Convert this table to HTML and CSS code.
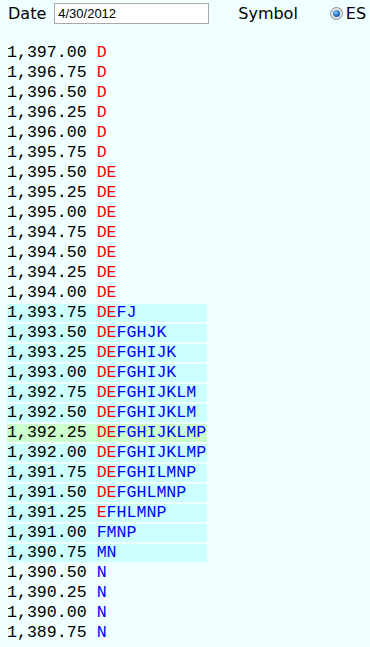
FILE: index.html
```html
<!DOCTYPE html>
<html>
<head>
<meta charset="utf-8">
<link rel="stylesheet" href="styles.css">
</head>
<body>
<div class="header">
  <span class="label">Date</span>
  <input class="date" type="text" value="4/30/2012">
  <span class="label symbol">Symbol</span>
  <span class="radio"><span class="dot"></span></span>
  <span class="label es">ES</span>
</div>
<div class="rows">
  <div class="row"><span class="price">1,397.00</span> <span class="r">D</span></div>
  <div class="row"><span class="price">1,396.75</span> <span class="r">D</span></div>
  <div class="row"><span class="price">1,396.50</span> <span class="r">D</span></div>
  <div class="row"><span class="price">1,396.25</span> <span class="r">D</span></div>
  <div class="row"><span class="price">1,396.00</span> <span class="r">D</span></div>
  <div class="row"><span class="price">1,395.75</span> <span class="r">D</span></div>
  <div class="row"><span class="price">1,395.50</span> <span class="r">DE</span></div>
  <div class="row"><span class="price">1,395.25</span> <span class="r">DE</span></div>
  <div class="row"><span class="price">1,395.00</span> <span class="r">DE</span></div>
  <div class="row"><span class="price">1,394.75</span> <span class="r">DE</span></div>
  <div class="row"><span class="price">1,394.50</span> <span class="r">DE</span></div>
  <div class="row"><span class="price">1,394.25</span> <span class="r">DE</span></div>
  <div class="row"><span class="price">1,394.00</span> <span class="r">DE</span></div>
  <div class="row hl"><span class="price">1,393.75</span> <span class="r">DE</span><span class="b">FJ</span></div>
  <div class="row hl"><span class="price">1,393.50</span> <span class="r">DE</span><span class="b">FGHJK</span></div>
  <div class="row hl"><span class="price">1,393.25</span> <span class="r">DE</span><span class="b">FGHIJK</span></div>
  <div class="row hl"><span class="price">1,393.00</span> <span class="r">DE</span><span class="b">FGHIJK</span></div>
  <div class="row hl"><span class="price">1,392.75</span> <span class="r">DE</span><span class="b">FGHIJKLM</span></div>
  <div class="row hl"><span class="price">1,392.50</span> <span class="r">DE</span><span class="b">FGHIJKLM</span></div>
  <div class="row poc"><span class="price">1,392.25</span> <span class="r">DE</span><span class="b">FGHIJKLMP</span></div>
  <div class="row hl"><span class="price">1,392.00</span> <span class="r">DE</span><span class="b">FGHIJKLMP</span></div>
  <div class="row hl"><span class="price">1,391.75</span> <span class="r">DE</span><span class="b">FGHILMNP</span></div>
  <div class="row hl"><span class="price">1,391.50</span> <span class="r">DE</span><span class="b">FGHLMNP</span></div>
  <div class="row hl"><span class="price">1,391.25</span> <span class="r">E</span><span class="b">FHLMNP</span></div>
  <div class="row hl"><span class="price">1,391.00</span> <span class="b">FMNP</span></div>
  <div class="row hl"><span class="price">1,390.75</span> <span class="b">MN</span></div>
  <div class="row"><span class="price">1,390.50</span> <span class="b">N</span></div>
  <div class="row"><span class="price">1,390.25</span> <span class="b">N</span></div>
  <div class="row"><span class="price">1,390.00</span> <span class="b">N</span></div>
  <div class="row"><span class="price">1,389.75</span> <span class="b">N</span></div>
</div>
</body>
</html>
```

FILE: styles.css
```css
html, body {
  margin: 0;
  padding: 0;
  background: #f0ffff;
}
body {
  font-family: "DejaVu Sans", Verdana, sans-serif;
  font-size: 16px;
  color: #000;
}
.header {
  display: flex;
  align-items: center;
  height: 21px;
  padding: 3px 0 0 8px;
}
.label {
  line-height: 21px;
}
.date {
  box-sizing: border-box;
  width: 155px;
  height: 21px;
  margin: 0 0 0 8px;
  padding: 0 3px;
  border: 1px solid #a9a9a9;
  background: #fff;
  font-family: "Liberation Sans", Arial, sans-serif;
  font-size: 13px;
  color: #000;
  outline: none;
}
.symbol {
  margin-left: 29px;
}
.radio {
  box-sizing: border-box;
  width: 13px;
  height: 13px;
  margin-left: 32px;
  border-radius: 50%;
  border: 1px solid #8a8a8a;
  background: radial-gradient(circle, #f4f4f4 0%, #dcdcdc 100%);
  display: flex;
  align-items: center;
  justify-content: center;
}
.dot {
  width: 7px;
  height: 7px;
  border-radius: 50%;
  background: radial-gradient(circle at 40% 35%, #8fd0ff 0%, #1a6fc0 55%, #0b3f80 100%);
}
.es {
  margin-left: 3px;
}
.rows {
  display: flex;
  flex-direction: column;
  gap: 2px;
  margin: 20px 0 0 7px;
  width: 200px;
}
.row {
  height: 18px;
  line-height: 18px;
  font-family: "Liberation Mono", "Courier New", monospace;
  font-size: 16.6px;
  white-space: pre;
  color: #000;
}
.hl {
  background: #ccffff;
}
.poc {
  background: #ccffcc;
}
.r {
  color: #ff0000;
}
.b {
  color: #0000ff;
}
```
